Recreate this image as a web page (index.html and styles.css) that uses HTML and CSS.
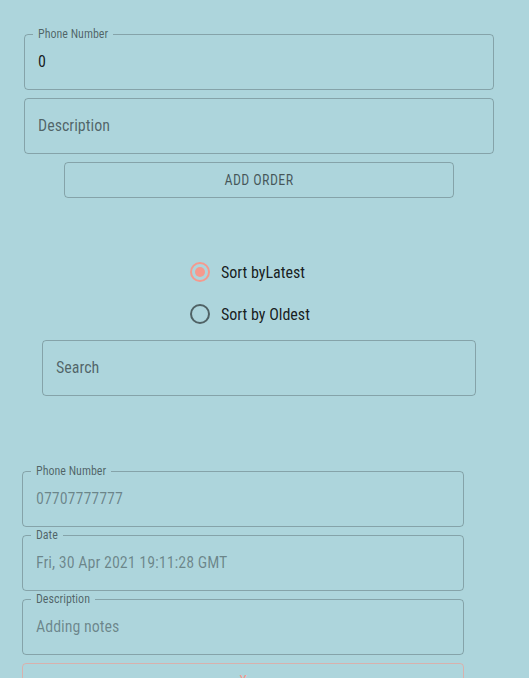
FILE: index.html
```html
<!DOCTYPE html>
<html lang="en">
<head>
<meta charset="utf-8">
<title>Orders</title>
<link rel="stylesheet" href="styles.css">
</head>
<body>
<main class="page">
  <section class="order-form">
    <div class="field">
      <span class="field-label">Phone Number</span>
      <span class="field-value">0</span>
    </div>
    <div class="field">
      <span class="field-placeholder">Description</span>
    </div>
    <button class="btn-add" type="button">Add Order</button>
  </section>

  <section class="sort">
    <label class="radio-row">
      <span class="radio radio-checked"><span class="radio-dot"></span></span>
      <span class="radio-text">Sort byLatest</span>
    </label>
    <label class="radio-row">
      <span class="radio"></span>
      <span class="radio-text">Sort by Oldest</span>
    </label>
  </section>

  <section class="search">
    <div class="field">
      <span class="field-placeholder">Search</span>
    </div>
  </section>

  <section class="order-list">
    <div class="field">
      <span class="field-label">Phone Number</span>
      <span class="field-disabled">07707777777</span>
    </div>
    <div class="field">
      <span class="field-label">Date</span>
      <span class="field-disabled">Fri, 30 Apr 2021 19:11:28 GMT</span>
    </div>
    <div class="field">
      <span class="field-label">Description</span>
      <span class="field-disabled">Adding notes</span>
    </div>
    <button class="btn-delete" type="button">X</button>
  </section>
</main>
</body>
</html>
```

FILE: styles.css
```css
html, body {
  margin: 0;
  padding: 0;
  background: #add5dc;
}

body {
  font-family: "Roboto Condensed", Roboto, "Liberation Sans", sans-serif;
  font-stretch: 87.5%;
  color: rgba(0, 0, 0, 0.87);
  height: 678px;
  overflow: hidden;
}

.page {
  display: flex;
  flex-direction: column;
}

.order-form {
  display: flex;
  flex-direction: column;
  gap: 8px;
  margin: 34px 0 0 24px;
  width: 470px;
}

.field {
  position: relative;
  box-sizing: border-box;
  height: 56px;
  border: 1px solid rgba(0, 0, 0, 0.23);
  border-radius: 4px;
  display: flex;
  align-items: center;
  padding: 0 13px 2px;
  font-size: 16px;
}

.field-label {
  position: absolute;
  top: -7px;
  left: 8px;
  padding: 0 5px;
  font-size: 12px;
  line-height: 12px;
  background: #add5dc;
  color: rgba(0, 0, 0, 0.54);
}

.field-value {
  color: rgba(0, 0, 0, 0.87);
}

.field-placeholder {
  color: rgba(0, 0, 0, 0.54);
}

.field-disabled {
  color: rgba(0, 0, 0, 0.38);
}

.btn-add {
  align-self: center;
  width: 390px;
  height: 36px;
  background: transparent;
  border: 1px solid rgba(0, 0, 0, 0.23);
  border-radius: 4px;
  font-family: inherit;
  font-stretch: inherit;
  font-size: 14px;
  letter-spacing: 0.4px;
  text-transform: uppercase;
  color: rgba(0, 0, 0, 0.6);
  padding: 0;
}

.sort {
  display: flex;
  flex-direction: column;
  margin: 53px 0 0 179px;
}

.radio-row {
  display: flex;
  align-items: center;
  height: 42px;
  font-size: 16px;
}

.radio {
  box-sizing: border-box;
  width: 20px;
  height: 20px;
  margin: 0 11px;
  border: 2px solid rgba(0, 0, 0, 0.54);
  border-radius: 50%;
  display: flex;
  align-items: center;
  justify-content: center;
}

.radio-checked {
  border-color: #f59a8e;
}

.radio-dot {
  width: 10px;
  height: 10px;
  border-radius: 50%;
  background: #f59a8e;
}

.radio-text {
  color: rgba(0, 0, 0, 0.87);
}

.search {
  margin: 5px 0 0 42px;
  width: 434px;
}

.order-list {
  display: flex;
  flex-direction: column;
  gap: 8px;
  margin: 75px 0 0 22px;
  width: 442px;
}

.btn-delete {
  height: 36px;
  background: transparent;
  border: 1px solid rgba(245, 154, 142, 0.6);
  border-radius: 4px;
  font-family: inherit;
  font-stretch: inherit;
  font-size: 14px;
  color: #f59a8e;
  padding: 0;
}
```
